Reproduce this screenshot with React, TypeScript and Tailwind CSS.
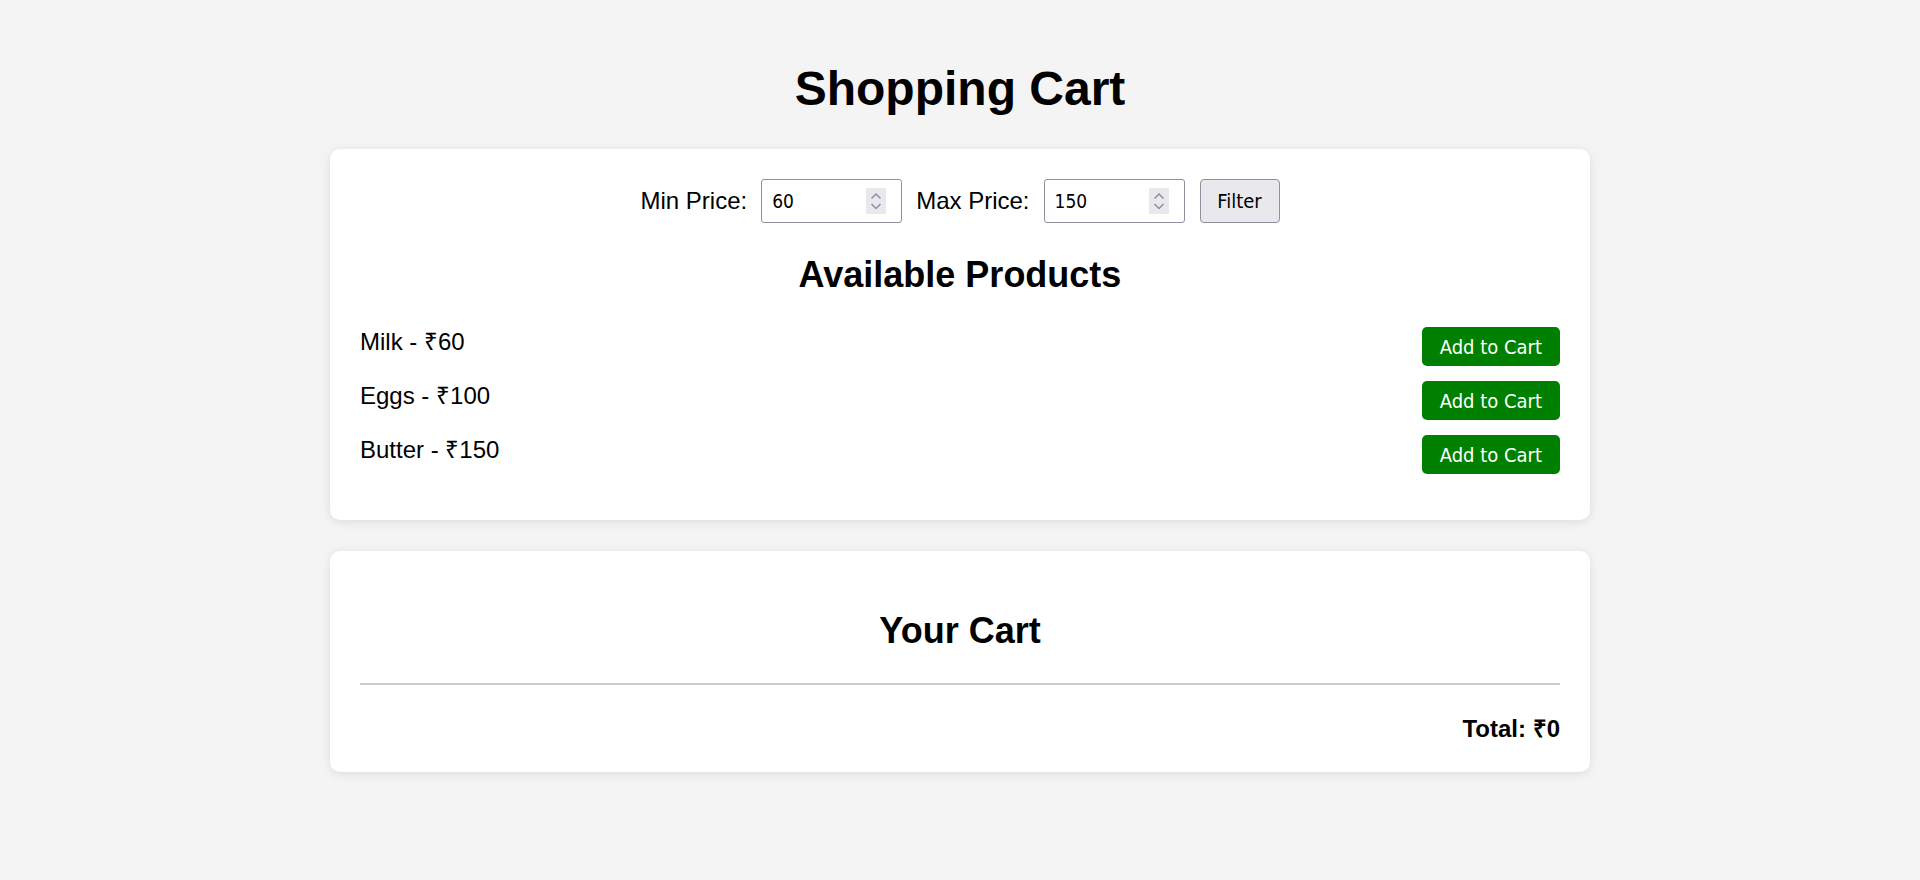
import { useState } from 'react';

type Product = { id: number; name: string; price: number };

const PRODUCTS: Product[] = [
  { id: 1, name: 'Milk', price: 60 },
  { id: 2, name: 'Eggs', price: 100 },
  { id: 3, name: 'Butter', price: 150 },
];

const controlFont = "font-['DejaVu_Sans_Condensed','DejaVu_Sans',sans-serif]";

function Spinner() {
  return (
    <svg width="20" height="26" viewBox="0 0 20 26" className="absolute left-[104px] top-[8px]">
      <rect x="0" y="0" width="20" height="26" fill="#e9e9ed" />
      <path d="M5.5 10.5 L10 6 L14.5 10.5" fill="none" stroke="#8f8f9d" strokeWidth="1.5" />
      <path d="M5.5 16 L10 20.5 L14.5 16" fill="none" stroke="#8f8f9d" strokeWidth="1.5" />
    </svg>
  );
}

function NumberBox({ value, onChange }: { value: string; onChange: (v: string) => void }) {
  return (
    <div className="relative w-[141px] h-[44px] bg-white border border-[#8f8f9d] rounded-[3px]">
      <input
        type="text"
        value={value}
        onChange={(e) => onChange(e.target.value)}
        className={`${controlFont} w-[100px] h-full pl-[10px] text-[19px] text-black bg-transparent outline-none`}
      />
      <Spinner />
    </div>
  );
}

export default function App() {
  const [min, setMin] = useState('60');
  const [max, setMax] = useState('150');
  const [cart, setCart] = useState<Product[]>([]);

  const total = cart.reduce((sum, p) => sum + p.price, 0);

  return (
    <div className="min-h-screen bg-[#f4f4f4] flex flex-col items-center font-['Liberation_Sans',Arial,sans-serif] text-black">
      <h1 className="mt-[61px] mb-[33px] text-[48px] leading-[55px] font-bold">Shopping Cart</h1>

      <div className="w-[1260px] bg-white rounded-[10px] shadow-[0_2px_10px_rgba(0,0,0,0.1)] p-[30px]">
        <div className="flex items-center justify-center">
          <span className="text-[24px] mr-[14px]">Min Price:</span>
          <div className="mr-[14px]">
            <NumberBox value={min} onChange={setMin} />
          </div>
          <span className="text-[24px] mr-[14px]">Max Price:</span>
          <div className="mr-[15px]">
            <NumberBox value={max} onChange={setMax} />
          </div>
          <button
            className={`${controlFont} w-[80px] h-[44px] text-[20px] bg-[#e9e9ed] border border-[#8f8f9d] rounded-[4px]`}
          >
            Filter
          </button>
        </div>

        <h2 className="mt-[31px] text-center text-[36px] leading-[41px] font-bold">Available Products</h2>

        <ul className="mt-[32px] mb-[16px] flex flex-col gap-[15px]">
          {PRODUCTS.map((p) => (
            <li key={p.id} className="flex justify-between items-start">
              <span className="text-[24px] leading-[30px]">
                {p.name} - ₹{p.price}
              </span>
              <button
                onClick={() => setCart([...cart, p])}
                className={`${controlFont} h-[39px] px-[18px] text-[20px] text-white bg-[#008000] rounded-[5px]`}
              >
                Add to Cart
              </button>
            </li>
          ))}
        </ul>
      </div>

      <div className="mt-[31px] w-[1260px] bg-white rounded-[10px] shadow-[0_2px_10px_rgba(0,0,0,0.1)] p-[30px]">
        <h2 className="mt-[29px] text-center text-[36px] leading-[41px] font-bold">Your Cart</h2>
        <div className="mt-[32px] h-[2px] bg-[#cccccc]" />
        <p className="mt-[30px] text-right text-[24px] leading-[27px] font-bold">Total: ₹{total}</p>
      </div>
    </div>
  );
}
